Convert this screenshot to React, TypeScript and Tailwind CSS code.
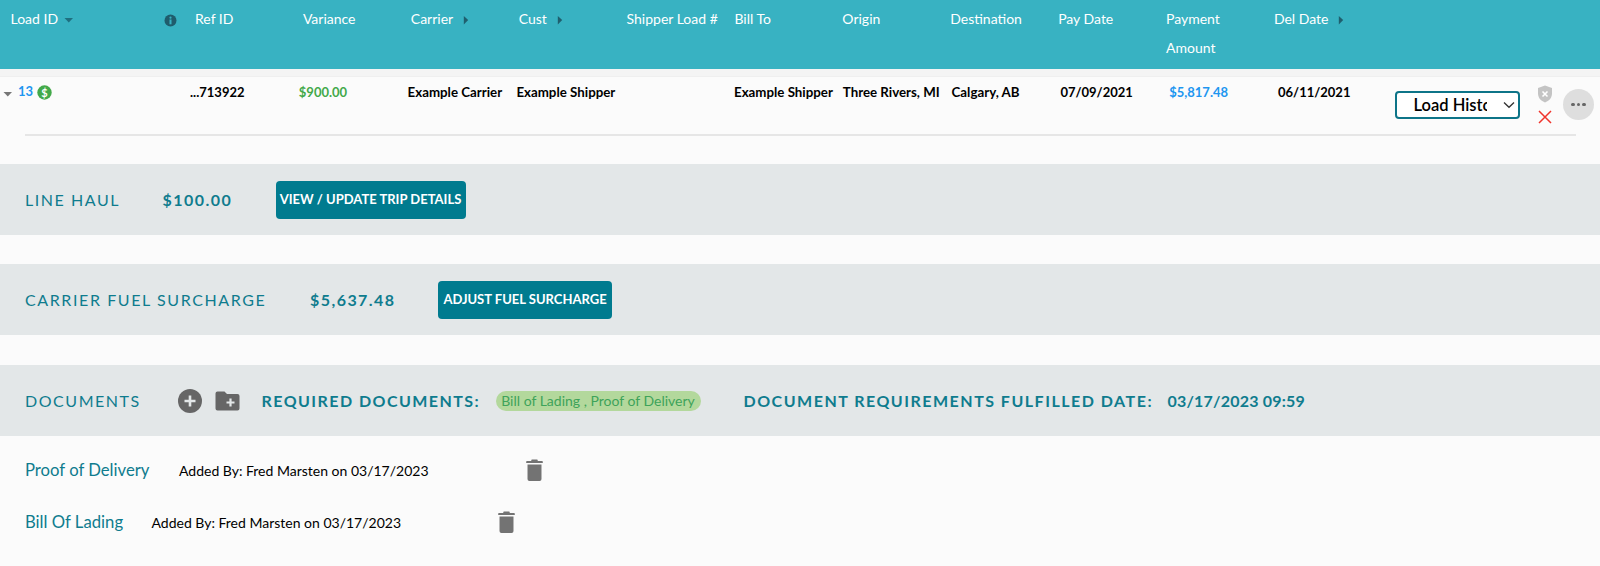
import React from "react";

const Caret = ({ dir = "down", className = "" }: { dir?: "down" | "right"; className?: string }) => (
  <svg width="10" height="10" viewBox="0 0 10 10" className={className}>
    {dir === "down" ? <path d="M0.5 3h8.5L4.8 7.4z" fill="currentColor" /> : <path d="M2.800 1l4.400 4-4.400 4.400z" fill="currentColor" />}
  </svg>
);

const Trash = () => (
  <svg width="17" height="22" viewBox="0 0 18 22" preserveAspectRatio="none" className="block">
    <path d="M6 0.500h6l.6 1.500H17a.8.8 0 0 1 .8.8V4H.2V2.800A.8.8 0 0 1 1 2h4.400z" fill="#737373" />
    <path d="M1.600 5.500h14.800v14.500a2 2 0 0 1-2 2H3.600a2 2 0 0 1-2-2z" fill="#737373" />
  </svg>
);

const Head = ({ children, caret }: { children: React.ReactNode; caret?: boolean }) => (
  <div className="flex items-start gap-[8px] whitespace-nowrap">
    <span>{children}</span>
    {caret && <Caret dir="right" className="mt-[10px] text-[#1f5f6e]" />}
  </div>
);

const Band = ({ children }: { children: React.ReactNode }) => (
  <div className="h-[71px] bg-[#e3e7e8] flex items-center pl-[25px] text-[#0f7c8e]">{children}</div>
);

const Btn = ({ children, className = "" }: { children: React.ReactNode; className?: string }) => (
  <button className={`h-[38px] rounded-[4px] bg-[#007b8f] text-white text-[13px] font-bold flex items-center justify-center whitespace-nowrap ${className}`}>
    {children}
  </button>
);

const Doc = ({ name, nameW, y }: { name: string; nameW: string; y: string }) => (
  <div className={`flex items-center h-[22px] pl-[25px] ${y}`}>
    <span className={`text-[16.7px] pt-[2px] text-[#0f7c8e] whitespace-nowrap ${nameW}`}>{name}</span>
    <span className="text-[14px] w-[249.5px] text-black whitespace-nowrap">Added By: Fred Marsten on 03/17/2023</span>
    <span className="ml-[97px]"><Trash /></span>
  </div>
);

export default function App() {
  return (
    <div className="w-[1600px] h-[566px] overflow-hidden bg-[#fbfbfb] font-['Lato','Liberation_Sans',sans-serif]">
      <div className="h-[69px] bg-[#38b2c2] text-white text-[14px] leading-[28.5px] grid grid-cols-[184.500px_repeat(12,107.9px)] pl-[10.500px] pt-[5px]">
        <div className="flex items-start relative">
          <span>Load ID</span>
          <Caret className="mt-[10px] ml-[6px] text-[#1f6f80]" />
          <svg width="13" height="13" viewBox="0 0 13 13" className="absolute left-[153px] top-[9px]">
            <circle cx="6.500" cy="6.500" r="6" fill="#1f5c6c" />
            <circle cx="6.500" cy="3.700" r="1.100" fill="#38b2c2" />
            <rect x="5.500" y="5.500" width="2" height="4.800" fill="#38b2c2" />
          </svg>
        </div>
        <Head>Ref ID</Head>
        <Head>Variance</Head>
        <Head caret>Carrier</Head>
        <Head caret>Cust</Head>
        <Head>Shipper Load #</Head>
        <Head>Bill To</Head>
        <Head>Origin</Head>
        <Head>Destination</Head>
        <Head>Pay Date</Head>
        <div className="whitespace-nowrap">Payment<br />Amount</div>
        <Head caret>Del Date</Head>
      </div>
      <div className="h-[8px] bg-[#f4f4f4] border-b border-[#efefef]" />
      <div className="h-[59px] ml-[25px] mr-[24px] border-b-2 border-[#e6e6e6] relative">
        <div className="-ml-[25px] h-[57px] flex items-start">
          <div className="w-[190px] flex items-center h-[30px] pl-[3px]">
            <Caret className="text-[#777] mt-[3px]" />
            <span className="text-[13px] font-bold text-[#1e96f0] ml-[5px]">13</span>
            <svg width="15" height="15" viewBox="0 0 15 15" className="ml-[4px]">
              <circle cx="7.500" cy="7.500" r="7.200" fill="#43a94a" />
              <text x="7.500" y="11.500" textAnchor="middle" fontSize="11" fontWeight="700" fill="#fff" fontFamily="Lato">$</text>
            </svg>
          </div>
          <div className="grid grid-cols-[repeat(10,108.8px)] text-[13.3px] font-bold leading-[30px] text-black whitespace-nowrap">
            <div className="text-[13px]">...713922</div>
            <div className="text-[#43a94a] text-[13px]">$900.00</div>
            <div>Example Carrier</div>
            <div>Example Shipper</div>
            <div />
            <div>Example Shipper</div>
            <div>Three Rivers, MI</div>
            <div>Calgary, AB</div>
            <div className="text-[13px]">07/09/2021</div>
            <div className="text-[#1e96f0] text-[13px]">$5,817.48</div>
          </div>
        </div>
        <div className="absolute left-[1253px] top-0 text-[13px] font-bold leading-[30px] text-black">06/11/2021</div>
        <div className="absolute left-[1369.500px] top-[14px] w-[125px] h-[28px] rounded-[4px] border-2 border-[#0d7488] bg-white flex items-center">
          <span className="ml-[17px] w-[73px] overflow-hidden whitespace-nowrap text-[16.5px] font-semibold text-black">Load History</span>
          <svg width="12" height="8" viewBox="0 0 12 8" className="ml-[16px]"><path d="M1 1.500l5 4.800 5-4.800" fill="none" stroke="#333" strokeWidth="1.300" /></svg>
        </div>
        <svg width="16" height="18" viewBox="0 0 16 18" className="absolute left-[1512px] top-[8px]">
          <path d="M8 .5l7 2.500v5.500c0 4.500-3.200 7.500-7 9-3.800-1.500-7-4.500-7-9V3z" fill="#c4c4c4" />
          <path d="M5.500 6.500l5 5M10.500 6.500l-5 5" stroke="#fff" strokeWidth="1.600" />
        </svg>
        <svg width="14" height="14" viewBox="0 0 14 14" className="absolute left-[1513px] top-[33px]">
          <path d="M1 1l12 12M13 1L1 13" stroke="#f0342c" strokeWidth="1.500" />
        </svg>
        <div className="absolute left-[1538px] top-[12px] w-[31px] h-[31px] rounded-full bg-[#dedede] flex items-center justify-center gap-[2px]">
          <i className="w-[3.500px] h-[3.500px] rounded-full bg-[#666]" />
          <i className="w-[3.500px] h-[3.500px] rounded-full bg-[#666]" />
          <i className="w-[3.500px] h-[3.500px] rounded-full bg-[#666]" />
        </div>
      </div>

      <div className="mt-[28px] flex flex-col">
        <Band>
          <span className="text-[16px] tracking-[1.55px] w-[137.5px]">LINE HAUL</span>
          <span className="text-[16px] font-bold tracking-[1.45px] w-[113px]">$100.00</span>
          <Btn className="w-[190px]">VIEW / UPDATE TRIP DETAILS</Btn>
        </Band>
        <div className="h-[29px]" />
        <Band>
          <span className="text-[16px] tracking-[1.6px] w-[285px]">CARRIER FUEL SURCHARGE</span>
          <span className="text-[16px] font-bold tracking-[1.45px] w-[128px]">$5,637.48</span>
          <Btn className="w-[174px]">ADJUST FUEL SURCHARGE</Btn>
        </Band>
        <div className="h-[30px]" />
        <Band>
          <span className="text-[16px] tracking-[1.55px] w-[152.500px]">DOCUMENTS</span>
          <svg width="24" height="24" viewBox="0 0 24 24" className="mr-[13px]">
            <circle cx="12" cy="12" r="12" fill="#666" />
            <path d="M12 6.500v11M6.500 12h11" stroke="#e3e7e8" strokeWidth="2.600" />
          </svg>
          <svg width="25" height="20" viewBox="0 0 24 20" className="mr-[22px]">
            <path d="M2 0.500h7l2.500 2.500H22a2 2 0 0 1 2 2v12.500a2 2 0 0 1-2 2H2a2 2 0 0 1-2-2V2.500a2 2 0 0 1 2-2z" fill="#666" />
            <path d="M15 7.500v8M11 11.500h8" stroke="#e3e7e8" strokeWidth="2.200" />
          </svg>
          <span className="text-[16px] font-bold tracking-[1.45px] w-[234px] whitespace-nowrap">REQUIRED DOCUMENTS:</span>
          <span className="h-[20px] w-[205px] rounded-full bg-[#b3d89c] text-[14px] text-[#3ea35a] flex items-center justify-center whitespace-nowrap">Bill of Lading , Proof of Delivery</span>
          <span className="ml-[43px] w-[424px] text-[16px] font-bold tracking-[1.5px] whitespace-nowrap">DOCUMENT REQUIREMENTS FULFILLED DATE:</span>
          <span className="text-[16px] font-bold tracking-[0.2px] whitespace-nowrap">03/17/2023 09:59</span>
        </Band>
      </div>

      <Doc name="Proof of Delivery" nameW="w-[154px]" y="mt-[23px]" />
      <Doc name="Bill Of Lading" nameW="w-[126.5px]" y="mt-[30px]" />
    </div>
  );
}
